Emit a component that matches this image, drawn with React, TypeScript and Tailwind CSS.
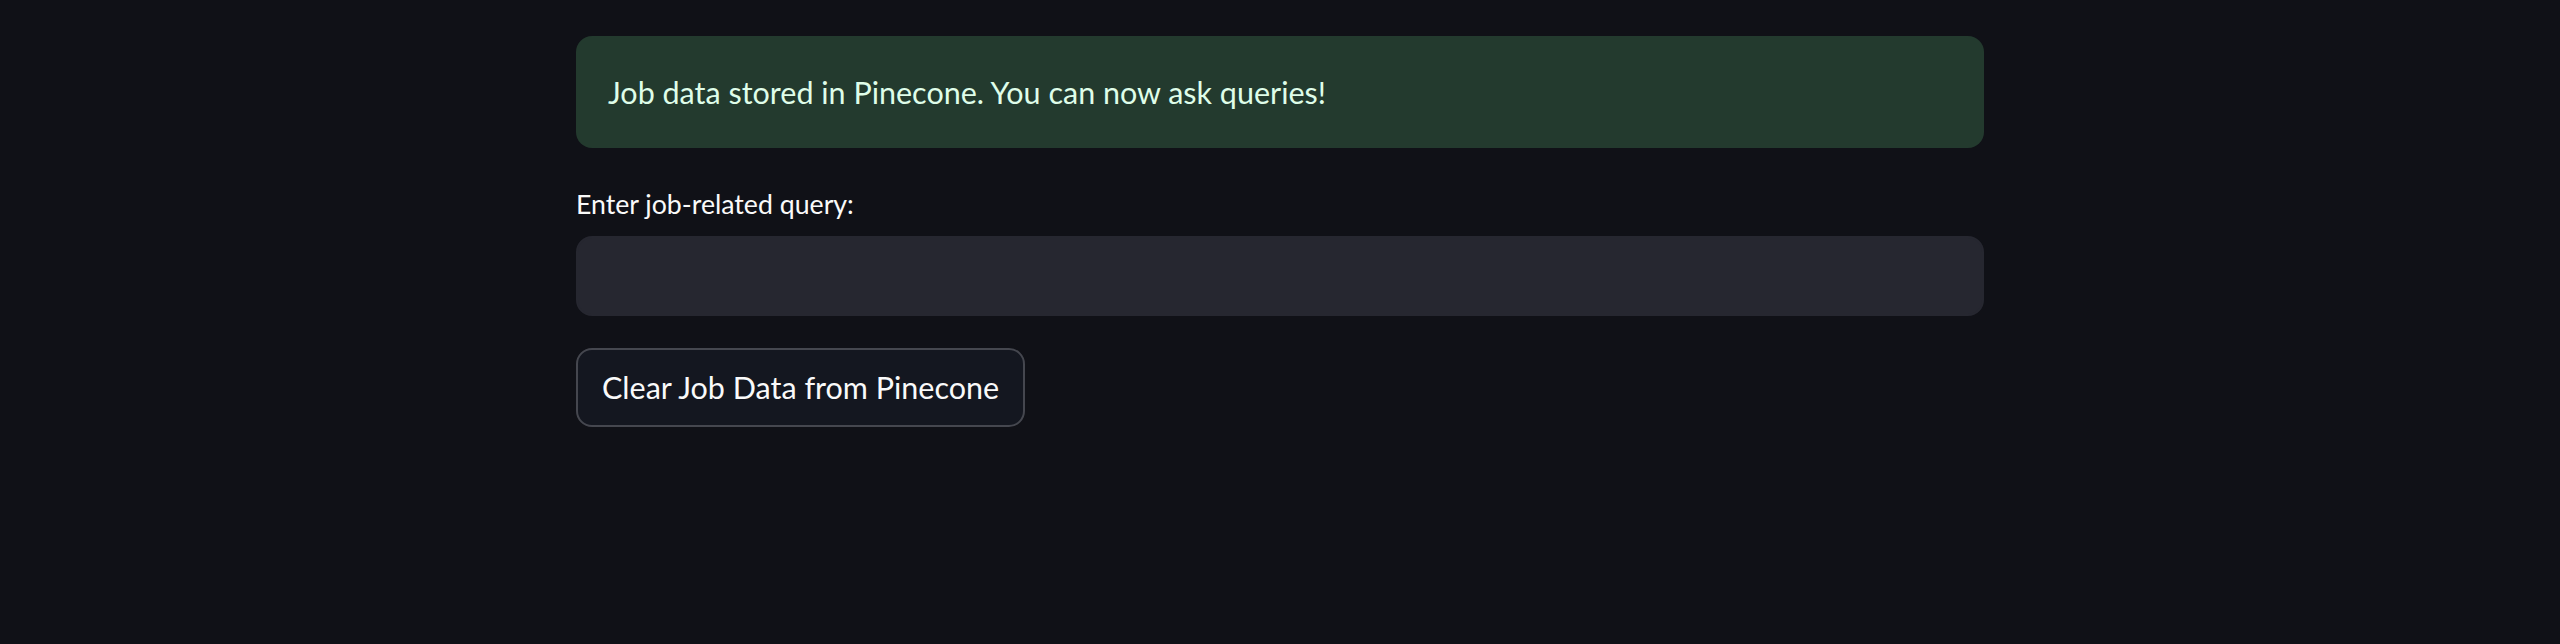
import * as React from 'react';

const App: React.FunctionComponent = () => {
    const [query, setQuery] = React.useState('');

    return (
        <div className="min-h-[644px] w-full bg-[#101117] font-['Lato',sans-serif] text-[#fafafa]">
            <main className="mx-auto flex w-[1408px] flex-col pt-[36px]">
                {/* success alert */}
                <div className="rounded-[16px] bg-[#233a2e] px-[32px] py-[32px] text-[30.5px] leading-[48px] text-[#dffde9]">
                    Job data stored in Pinecone. You can now ask queries!
                </div>

                {/* text input */}
                <label className="mt-[32px] flex h-[48px] items-center text-[26.7px] text-[#fafafa]">Enter job-related query:</label>
                <input
                    value={query}
                    onChange={(e) => setQuery(e.target.value)}
                    className="mt-[8px] h-[80px] w-full rounded-[16px] border-2 border-[#262730] bg-[#262730] px-[24px] text-[30.5px] text-[#fafafa] outline-none"
                />

                {/* button */}
                <div className="mt-[32px]">
                    <button className="h-[79px] rounded-[16px] border-2 border-[#45474f] bg-[#141720] px-[24px] text-[30.5px] text-[#fafafa]">
                        Clear Job Data from Pinecone
                    </button>
                </div>
            </main>
        </div>
    );
};

export default App;
